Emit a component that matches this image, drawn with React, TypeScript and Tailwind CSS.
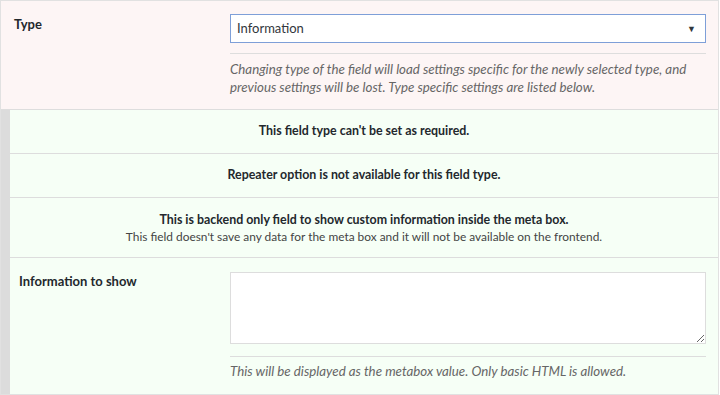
export default function App() {
  return (
    <div className="h-[395px] w-[720px] bg-white font-['Lato',sans-serif] text-[13px] text-[#32373c]">
      <div className="w-[719px] border border-[#e1e1e1] border-b-0">
        {/* type */}
        <div className="flex bg-[#fdf5f5] pt-[13px] pb-[13px]">
          <div className="w-[229px] pl-[13px] pt-[1px] font-bold text-[#23282d]">Type</div>
          <div className="w-[476px]">
            <div className="flex h-[29px] items-center justify-between border border-[#7e9fd8] bg-white pl-[6px] pr-[9px]">
              <span>Information</span>
              <span className="text-[9px]">▼</span>
            </div>
            <div className="mt-[10px] border-t border-[#dddddd] pt-[6px] text-[13.3px] italic leading-[18px] text-[#666]">
              Changing type of the field will load settings specific for the newly selected type, and previous settings
              will be lost. Type specific settings are listed below.
            </div>
          </div>
        </div>

        <div className="flex border-t border-[#dddddd]">
          <div className="w-[9px] bg-[#dcdcdc]" />
          <div className="flex-1 bg-[#f6fff6] text-[12.4px]">
            <div className="flex h-[43px] items-center justify-center font-bold text-[#23282d]">
              This field type can't be set as required.
            </div>
            <div className="flex h-[44px] items-center justify-center border-t border-[#dddddd] font-bold text-[#23282d]">
              Repeater option is not available for this field type.
            </div>
            <div className="flex h-[60px] flex-col items-center justify-center border-t border-[#dddddd] leading-[17px]">
              <div className="font-bold text-[#23282d]">
                This is backend only field to show custom information inside the meta box.
              </div>
              <div className="text-[11.9px] text-[#444]">
                This field doesn't save any data for the meta box and it will not be available on the frontend.
              </div>
            </div>
            <div className="flex border-t border-[#dddddd] pt-[14px] pb-[14px]">
              <div className="w-[220px] pl-[9px] text-[13px] font-bold text-[#23282d]">Information to show</div>
              <div className="w-[476px]">
                <textarea className="block h-[72px] w-full resize-y border border-[#dddddd] bg-white" />
                <div className="mt-[12px] border-t border-[#dddddd] pt-[5px] text-[13.3px] italic leading-[18px] text-[#666]">
                  This will be displayed as the metabox value. Only basic HTML is allowed.
                </div>
              </div>
            </div>
          </div>
        </div>
        <div className="border-b border-[#e1e1e1]" />
      </div>
    </div>
  );
}
